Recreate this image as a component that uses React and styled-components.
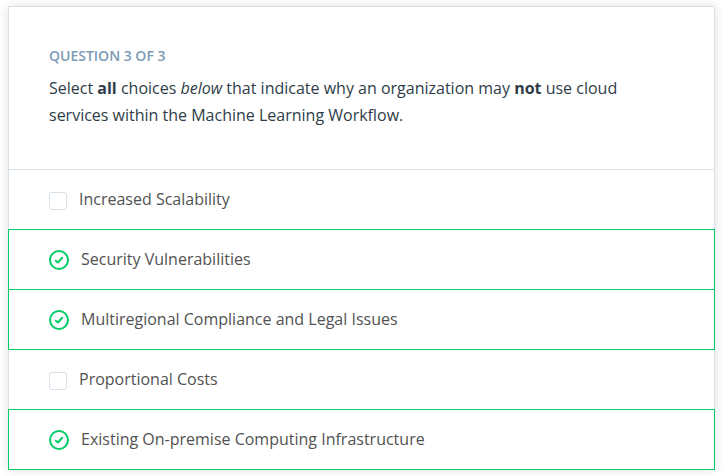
import React from "react";
import styled, { createGlobalStyle, css } from "styled-components";

const GlobalStyle = createGlobalStyle`
  *, *::before, *::after { box-sizing: border-box; }
  body {
    margin: 0;
    background: #fff;
    font-family: "Open Sans", "Noto Sans", sans-serif;
    overflow: hidden;
  }
`;

const Page = styled.main`
  padding: 6px 8px;
  height: 476px;
`;

const Card = styled.section`
  width: 707px;
  height: 464px;
  background: #fff;
  border: 1px solid #d6e1ea;
  box-shadow: 0 0 10px rgba(0, 0, 0, 0.12);
`;

const Header = styled.header`
  height: 163px;
  padding: 39px 40px 0;
  border-bottom: 1px solid #d6e1ea;
`;

const Counter = styled.h2`
  margin: 0;
  font-size: 14px;
  line-height: 20px;
  font-weight: 600;
  color: #7d9bb5;
  text-transform: uppercase;
`;

const Prompt = styled.p`
  margin: 9px 0 0;
  font-size: 16px;
  line-height: 27px;
  color: #2e3d49;
`;

const Choices = styled.ul`
  margin: 0;
  padding: 0;
  list-style: none;
`;

const Choice = styled.li`
  display: flex;
  align-items: center;
  height: 61px;
  margin: -1px -1px 0;
  padding: 0 40px;
  border: 1px solid transparent;
  cursor: pointer;
  ${({ $correct }) =>
    $correct &&
    css`
      border-color: #02cc66;
    `}
`;

const Checkbox = styled.span`
  flex: none;
  width: 18px;
  height: 18px;
  margin: 3px 12px 0 0;
  border: 1px solid #d6e1ea;
  border-radius: 3px;
`;

const CheckIcon = styled.svg`
  flex: none;
  width: 20px;
  height: 20px;
  margin: 1px 12px 0 0;
  fill: none;
  stroke: #02cc66;
  stroke-width: 2;
  stroke-linecap: round;
  stroke-linejoin: round;
`;

const Label = styled.span`
  margin-bottom: 2px;
  font-size: 16px;
  line-height: 24px;
  color: #525252;
  white-space: nowrap;
`;

const choices = [
  { text: "Increased Scalability", correct: false },
  { text: "Security Vulnerabilities", correct: true },
  { text: "Multiregional Compliance and Legal Issues", correct: true },
  { text: "Proportional Costs", correct: false },
  { text: "Existing On-premise Computing Infrastructure", correct: true },
];

function CorrectMark() {
  return (
    <CheckIcon viewBox="0 0 20 20" aria-hidden="true">
      <circle cx="10" cy="10" r="9" />
      <path d="M6.8 10.7 L8.9 12.5 L13.2 7.8" />
    </CheckIcon>
  );
}

export default function App() {
  return (
    <>
      <GlobalStyle />
      <Page>
        <Card>
          <Header>
            <Counter>Question 3 of 3</Counter>
            <Prompt>
              Select <strong>all</strong> choices <em>below</em> that indicate why an organization may{" "}
              <strong>not</strong> use cloud services within the Machine Learning Workflow.
            </Prompt>
          </Header>
          <Choices>
            {choices.map(({ text, correct }) => (
              <Choice key={text} $correct={correct}>
                {correct ? <CorrectMark /> : <Checkbox />}
                <Label>{text}</Label>
              </Choice>
            ))}
          </Choices>
        </Card>
      </Page>
    </>
  );
}
